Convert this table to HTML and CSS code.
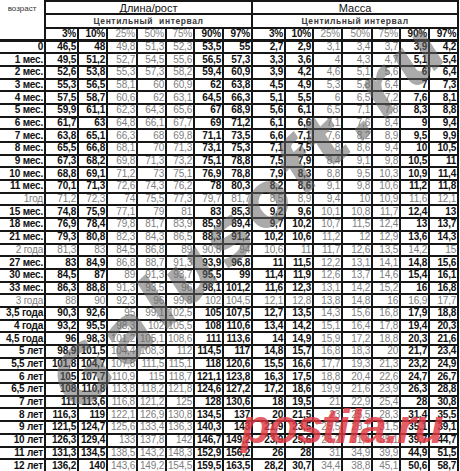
FILE: index.html
```html
<!DOCTYPE html>
<html lang="ru">
<head>
<meta charset="utf-8">
<title>Центильные таблицы</title>
<link rel="stylesheet" href="styles.css">
</head>
<body>
<div class="sheet">
<table class="grid">
<colgroup>
<col class="c-age">
<col class="c33"><col class="c29"><col class="c30"><col class="c29"><col class="c28"><col class="c29"><col class="c29">
<col class="c33"><col class="c28"><col class="c29"><col class="c30"><col class="c28"><col class="c29"><col class="c29">
</colgroup>
<thead>
<tr class="h1">
<th class="age-head" rowspan="3">возраст</th>
<th class="sec" colspan="7">Длина/рост</th>
<th class="sec" colspan="7">Масса</th>
</tr>
<tr class="h2">
<th class="sub" colspan="7">Центильный&nbsp; интервал</th>
<th class="sub" colspan="7">Центильный интервал</th>
</tr>
<tr class="h3">
<th>3%</th><th>10%</th><th class="lt">25%</th><th class="lt">50%</th><th class="lt">75%</th><th>90%</th><th>97%</th>
<th>3%</th><th>10%</th><th class="lt">25%</th><th class="lt">50%</th><th class="lt">75%</th><th>90%</th><th>97%</th>
</tr>
</thead>
<tbody>
<tr><th>0</th><td>46,5</td><td>48</td><td>49,8</td><td>51,3</td><td>52,3</td><td>53,5</td><td>55</td><td>2,7</td><td>2,9</td><td>3,1</td><td>3,4</td><td>3,7</td><td>3,9</td><td>4,2</td></tr>
<tr><th>1 мес.</th><td>49,5</td><td>51,2</td><td>52,7</td><td>54,5</td><td>55,6</td><td>56,5</td><td>57,3</td><td>3,3</td><td>3,6</td><td>4</td><td>4,3</td><td>4,7</td><td>5,1</td><td>5,4</td></tr>
<tr><th>2 мес.</th><td>52,6</td><td>53,8</td><td>55,3</td><td>57,3</td><td>58,2</td><td>59,4</td><td>60,9</td><td>3,9</td><td>4,2</td><td>4,6</td><td>5,1</td><td>5,6</td><td>6</td><td>6,4</td></tr>
<tr><th>3 мес.</th><td>55,3</td><td>56,5</td><td>58,1</td><td>60</td><td>60,9</td><td>62</td><td>63,8</td><td>4,5</td><td>4,9</td><td>5,3</td><td>5,8</td><td>6,4</td><td>7</td><td>7,3</td></tr>
<tr><th>4 мес.</th><td>57,5</td><td>58,7</td><td>60,6</td><td>62</td><td>63,1</td><td>64,5</td><td>66,3</td><td>5,1</td><td>5,5</td><td>6</td><td>6,5</td><td>7,2</td><td>7,6</td><td>8,1</td></tr>
<tr><th>5 мес.</th><td>59,9</td><td>61,1</td><td>62,3</td><td>64,3</td><td>65,6</td><td>67</td><td>68,9</td><td>5,6</td><td>6,1</td><td>6,5</td><td>7,1</td><td>7,8</td><td>8,3</td><td>8,8</td></tr>
<tr><th>6 мес.</th><td>61,7</td><td>63</td><td>64,8</td><td>66,1</td><td>67,7</td><td>69</td><td>71,2</td><td>6,1</td><td>6,6</td><td>7,1</td><td>7,6</td><td>8,4</td><td>9</td><td>9,4</td></tr>
<tr><th>7 мес.</th><td>63,8</td><td>65,1</td><td>66,3</td><td>68</td><td>69,8</td><td>71,1</td><td>73,5</td><td>6,6</td><td>7,1</td><td>7,6</td><td>8,2</td><td>8,9</td><td>9,5</td><td>9,9</td></tr>
<tr><th>8 мес.</th><td>65,5</td><td>66,8</td><td>68,1</td><td>70</td><td>71,3</td><td>73,1</td><td>75,3</td><td>7,1</td><td>7,5</td><td>8</td><td>8,6</td><td>9,4</td><td>10</td><td>10,5</td></tr>
<tr><th>9 мес.</th><td>67,3</td><td>68,2</td><td>69,8</td><td>71,3</td><td>73,2</td><td>75,1</td><td>78,8</td><td>7,5</td><td>7,9</td><td>8,4</td><td>9,1</td><td>9,8</td><td>10,5</td><td>11</td></tr>
<tr><th>10 мес.</th><td>68,8</td><td>69,1</td><td>71,2</td><td>73</td><td>75,1</td><td>76,9</td><td>78,8</td><td>7,9</td><td>8,3</td><td>8,8</td><td>9,5</td><td>10,3</td><td>10,9</td><td>11,4</td></tr>
<tr><th>11 мес.</th><td>70,1</td><td>71,3</td><td>72,6</td><td>74,3</td><td>76,2</td><td>78</td><td>80,3</td><td>8,2</td><td>8,6</td><td>9,1</td><td>9,8</td><td>10,6</td><td>11,2</td><td>11,8</td></tr>
<tr class="soft"><th>1год</th><td>71,2</td><td>72,3</td><td>74</td><td>75,5</td><td>77,3</td><td>79,7</td><td>81,7</td><td>8,5</td><td>8,9</td><td>9,4</td><td>10</td><td>10,9</td><td>11,6</td><td>12,1</td></tr>
<tr><th>15 мес.</th><td>74,8</td><td>75,9</td><td>77,1</td><td>79</td><td>81</td><td>83</td><td>85,3</td><td>9,2</td><td>9,6</td><td>10,1</td><td>10,8</td><td>11,7</td><td>12,4</td><td>13</td></tr>
<tr><th>18 мес.</th><td>76,9</td><td>78,4</td><td>79,8</td><td>81,7</td><td>83,9</td><td>85,9</td><td>89,4</td><td>9,7</td><td>10,2</td><td>10,7</td><td>11,5</td><td>12,4</td><td>13</td><td>13,7</td></tr>
<tr><th>21 мес.</th><td>79,3</td><td>80,8</td><td>82,3</td><td>84,3</td><td>86,5</td><td>88,3</td><td>91,2</td><td>10,2</td><td>10,6</td><td>11,2</td><td>12</td><td>12,9</td><td>13,6</td><td>14,3</td></tr>
<tr class="soft"><th>2 года</th><td>81,3</td><td>83</td><td>84,5</td><td>86,8</td><td>89</td><td>90,8</td><td>94</td><td>10,6</td><td>11</td><td>11,7</td><td>12,6</td><td>13,5</td><td>14,2</td><td>15</td></tr>
<tr><th>27 мес.</th><td>83</td><td>84,9</td><td>86,8</td><td>88,7</td><td>91,3</td><td>93,9</td><td>96,8</td><td>11</td><td>11,5</td><td>12,2</td><td>13,1</td><td>14,1</td><td>14,8</td><td>15,6</td></tr>
<tr><th>30 мес.</th><td>84,5</td><td>87</td><td>89</td><td>91,3</td><td>93,7</td><td>95,5</td><td>99</td><td>11,4</td><td>11,9</td><td>12,6</td><td>13,7</td><td>14,6</td><td>15,4</td><td>16,1</td></tr>
<tr><th>33 мес.</th><td>86,3</td><td>88,8</td><td>91,3</td><td>93,5</td><td>96</td><td>98,1</td><td>101,2</td><td>11,6</td><td>12,3</td><td>13,1</td><td>14,2</td><td>15,2</td><td>16</td><td>16,8</td></tr>
<tr class="soft"><th>3 года</th><td>88</td><td>90</td><td>92,3</td><td>96</td><td>99,8</td><td>102</td><td>104,5</td><td>12,1</td><td>12,8</td><td>13,8</td><td>14,8</td><td>16</td><td>16,9</td><td>17,7</td></tr>
<tr><th>3,5 года</th><td>90,3</td><td>92,6</td><td>95</td><td>99,1</td><td>102,5</td><td>105</td><td>107,5</td><td>12,7</td><td>13,5</td><td>14,3</td><td>15,6</td><td>16,8</td><td>17,9</td><td>18,8</td></tr>
<tr><th>4 года</th><td>93,2</td><td>95,5</td><td>98,3</td><td>102</td><td>105,5</td><td>108</td><td>110,6</td><td>13,4</td><td>14,2</td><td>15,1</td><td>16,4</td><td>17,8</td><td>19,4</td><td>20,3</td></tr>
<tr><th>4,5 года</th><td>96</td><td>98,3</td><td>101,2</td><td>105,1</td><td>108,6</td><td>111</td><td>113,6</td><td>14</td><td>14,9</td><td>15,9</td><td>17,2</td><td>18,8</td><td>20,3</td><td>21,6</td></tr>
<tr><th>5 лет</th><td>98,9</td><td>101,5</td><td>104,4</td><td>108,3</td><td>112</td><td>114,5</td><td>117</td><td>14,8</td><td>15,7</td><td>16,8</td><td>18,3</td><td>20</td><td>21,7</td><td>23,4</td></tr>
<tr><th>5,5 лет</th><td>101,8</td><td>104,7</td><td>107,8</td><td>111,5</td><td>115,1</td><td>118</td><td>120,6</td><td>15,5</td><td>16,6</td><td>17,7</td><td>19,3</td><td>21,3</td><td>23,2</td><td>24,9</td></tr>
<tr><th>6 лет</th><td>105</td><td>107,7</td><td>110,9</td><td>115</td><td>118,7</td><td>121,1</td><td>123,8</td><td>16,3</td><td>17,5</td><td>18,8</td><td>20,4</td><td>22,6</td><td>24,7</td><td>26,7</td></tr>
<tr><th>6,5 лет</th><td>108</td><td>110,8</td><td>113,8</td><td>118,2</td><td>121,8</td><td>124,6</td><td>127,2</td><td>17,2</td><td>18,6</td><td>19,9</td><td>21,6</td><td>23,9</td><td>26,3</td><td>28,8</td></tr>
<tr><th>7 лет</th><td>111</td><td>113,6</td><td>116,8</td><td>121,2</td><td>125</td><td>128</td><td>130,6</td><td>18</td><td>19,5</td><td>21</td><td>22,9</td><td>25,4</td><td>28</td><td>30,8</td></tr>
<tr><th>8 лет</th><td>116,3</td><td>119</td><td>122,1</td><td>126,9</td><td>130,8</td><td>134,5</td><td>137</td><td>20</td><td>21,5</td><td>23</td><td>25,5</td><td>28,3</td><td>31,4</td><td>35,5</td></tr>
<tr><th>9 лет</th><td>121,5</td><td>124,7</td><td>125,6</td><td>133,4</td><td>136,3</td><td>140,3</td><td>143</td><td>21,9</td><td>23,5</td><td>25,5</td><td>28,1</td><td>31,5</td><td>35,1</td><td>39,1</td></tr>
<tr><th>10 лет</th><td>126,3</td><td>129,4</td><td>133</td><td>137,8</td><td>142</td><td>146,7</td><td>149,2</td><td>23,9</td><td>25,6</td><td>28,2</td><td>31,4</td><td>35,1</td><td>39,7</td><td>44,7</td></tr>
<tr><th>11 лет</th><td>131,3</td><td>134,5</td><td>138,5</td><td>143,2</td><td>148,3</td><td>152,9</td><td>156,2</td><td>26</td><td>28</td><td>31</td><td>34,9</td><td>39,9</td><td>44,9</td><td>51,5</td></tr>
<tr><th>12 лет</th><td>136,2</td><td>140</td><td>143,6</td><td>149,2</td><td>154,5</td><td>159,5</td><td>163,5</td><td>28,2</td><td>30,7</td><td>34,4</td><td>38,8</td><td>45,1</td><td>50,6</td><td>58,7</td></tr>
</tbody>
</table>
<div class="mark-grey" aria-hidden="true">Galusoft.ru</div>
<div class="mark-red" aria-hidden="true">postila.ru</div>
</div>
</body>
</html>
```
FILE: styles.css
```css
html, body {
  margin: 0;
  padding: 0;
  background: #ffffff;
}

.sheet {
  position: relative;
  width: 460px;
  height: 471px;
  overflow: hidden;
  font-family: "Liberation Sans", Arial, sans-serif;
  color: #111;
}

.grid {
  border-collapse: collapse;
  table-layout: fixed;
  width: 459px;
}

.c-age { width: 45px; }
.c33 { width: 33px; }
.c30 { width: 30px; }
.c29 { width: 29px; }
.c28 { width: 28px; }

.grid th,
.grid td {
  border: 2px solid #161616;
  padding: 0 1px 0 0;
  text-align: right;
  font-size: 10px;
  letter-spacing: -0.2px;
  line-height: 10px;
  font-weight: bold;
  white-space: nowrap;
  overflow: hidden;
}

/* header */
.h1 { height: 13px; }
.h2 { height: 14px; }
.h3 { height: 12px; }

.age-head {
  vertical-align: top;
  text-align: center !important;
  font-weight: normal !important;
  font-size: 8px !important;
  letter-spacing: 0 !important;
  color: #333;
  padding: 3px 0 0 0 !important;
  border-top: 0 !important;
  border-left: 0 !important;
  border-bottom-width: 3px !important;
}

.sec {
  text-align: center !important;
  font-weight: normal !important;
  font-size: 11px !important;
  letter-spacing: 0 !important;
  padding: 0 !important;
}

.sub {
  text-align: center !important;
  font-size: 8.5px !important;
  letter-spacing: 0.6px !important;
  color: #3a3a3a;
  padding: 0 !important;
}

.h3 th {
  border-bottom-width: 3px;
}

.grid th.lt {
  font-weight: normal;
  color: #858585;
}

/* body */
tbody tr { height: 12.7px; }

tbody th {
  border-left: 0 !important;
}

tbody td:nth-child(4),
tbody td:nth-child(5),
tbody td:nth-child(6),
tbody td:nth-child(11),
tbody td:nth-child(12),
tbody td:nth-child(13) {
  font-weight: normal;
  color: #7e7e7e;
}

tbody tr.soft th,
tbody tr.soft td {
  font-weight: normal;
  color: #7e7e7e;
}

/* watermarks */
.mark-grey {
  position: absolute;
  left: 62px;
  top: 360px;
  transform-origin: 0 50%;
  transform: rotate(-44deg);
  font-family: "DejaVu Sans", sans-serif;
  font-weight: bold;
  font-style: italic;
  font-size: 72px;
  letter-spacing: 6px;
  line-height: 1;
  color: rgba(100, 100, 100, 0.55);
  white-space: nowrap;
  pointer-events: none;
}

.mark-red {
  position: absolute;
  left: 241px;
  top: 403px;
  font-family: "Liberation Sans", Arial, sans-serif;
  font-weight: bold;
  font-style: italic;
  font-size: 48px;
  letter-spacing: -1.5px;
  line-height: 1;
  color: rgba(224, 56, 66, 0.82);
  white-space: nowrap;
  pointer-events: none;
}
```
